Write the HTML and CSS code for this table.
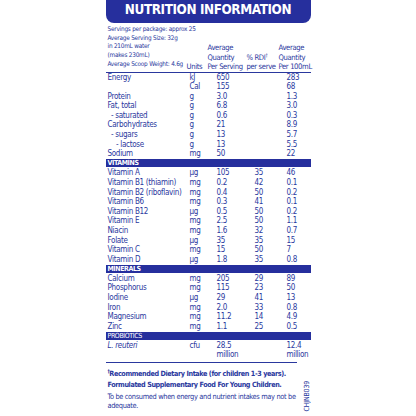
FILE: index.html
```html
<!DOCTYPE html>
<html lang="en">
<head>
  <meta charset="UTF-8">
  <title>Nutrition Information</title>
  <link rel="stylesheet" href="styles.css">
</head>
<body>
  <div class="panel">
    <h1 class="title">NUTRITION INFORMATION</h1>
    <div class="head">
      <div class="serve">
        Servings per package: approx 25<br>
        Average Serving Size: 32g<br>
        in 210mL water<br>
        (makes 230mL)<br>
        Average Scoop Weight: 4.6g
      </div>
      <div class="col">Units</div>
      <div class="col">Average<br>Quantity<br>Per Serving</div>
      <div class="col">% RDI<sup>†</sup><br>per serve</div>
      <div class="col">Average<br>Quantity<br>Per 100mL</div>
    </div>

    <div class="row"><span>Energy</span><span>kJ</span><span>650</span><span></span><span>283</span></div>
    <div class="row"><span></span><span>Cal</span><span>155</span><span></span><span>68</span></div>
    <div class="row"><span>Protein</span><span>g</span><span>3.0</span><span></span><span>1.3</span></div>
    <div class="row"><span>Fat, total</span><span>g</span><span>6.8</span><span></span><span>3.0</span></div>
    <div class="row"><span class="sub">- saturated</span><span>g</span><span>0.6</span><span></span><span>0.3</span></div>
    <div class="row"><span>Carbohydrates</span><span>g</span><span>21</span><span></span><span>8.9</span></div>
    <div class="row"><span class="sub">- sugars</span><span>g</span><span>13</span><span></span><span>5.7</span></div>
    <div class="row"><span class="sub2">- lactose</span><span>g</span><span>13</span><span></span><span>5.5</span></div>
    <div class="row"><span>Sodium</span><span>mg</span><span>50</span><span></span><span>22</span></div>

    <div class="bar bold">VITAMINS</div>
    <div class="row"><span>Vitamin A</span><span>µg</span><span>105</span><span>35</span><span>46</span></div>
    <div class="row"><span>Vitamin B1 (thiamin)</span><span>mg</span><span>0.2</span><span>42</span><span>0.1</span></div>
    <div class="row"><span>Vitamin B2 (riboflavin)</span><span>mg</span><span>0.4</span><span>50</span><span>0.2</span></div>
    <div class="row"><span>Vitamin B6</span><span>mg</span><span>0.3</span><span>41</span><span>0.1</span></div>
    <div class="row"><span>Vitamin B12</span><span>µg</span><span>0.5</span><span>50</span><span>0.2</span></div>
    <div class="row"><span>Vitamin E</span><span>mg</span><span>2.5</span><span>50</span><span>1.1</span></div>
    <div class="row"><span>Niacin</span><span>mg</span><span>1.6</span><span>32</span><span>0.7</span></div>
    <div class="row"><span>Folate</span><span>µg</span><span>35</span><span>35</span><span>15</span></div>
    <div class="row"><span>Vitamin C</span><span>mg</span><span>15</span><span>50</span><span>7</span></div>
    <div class="row"><span>Vitamin D</span><span>µg</span><span>1.8</span><span>35</span><span>0.8</span></div>

    <div class="bar bold">MINERALS</div>
    <div class="row"><span>Calcium</span><span>mg</span><span>205</span><span>29</span><span>89</span></div>
    <div class="row"><span>Phosphorus</span><span>mg</span><span>115</span><span>23</span><span>50</span></div>
    <div class="row"><span>Iodine</span><span>µg</span><span>29</span><span>41</span><span>13</span></div>
    <div class="row"><span>Iron</span><span>mg</span><span>2.0</span><span>33</span><span>0.8</span></div>
    <div class="row"><span>Magnesium</span><span>mg</span><span>11.2</span><span>14</span><span>4.9</span></div>
    <div class="row"><span>Zinc</span><span>mg</span><span>1.1</span><span>25</span><span>0.5</span></div>

    <div class="bar">PROBIOTICS</div>
    <div class="row"><span><i>L. reuteri</i></span><span>cfu</span><span>28.5<br>million</span><span></span><span>12.4<br>million</span></div>

    <div class="foot">
      <div class="notes">
        <p class="bold"><sup>†</sup>Recommended Dietary Intake (for children 1-3 years).</p>
        <p class="bold">Formulated Supplementary Food For Young Children.</p>
        <p class="plain">To be consumed when energy and nutrient intakes may not be adequate.</p>
      </div>
      <div class="code">CHJNB039</div>
    </div>
  </div>
</body>
</html>
```

FILE: styles.css
```css
*{
  padding: 0;
  margin: 0;
}
body{
  background: #fff;
  font-family: "DejaVu Sans Condensed", "DejaVu Sans", "Liberation Sans", sans-serif;
  color: #2a389e;
}
.panel{
  width: 205px;
  margin: 0 auto;
}
.title{
  background: #262f9d;
  color: #fff;
  height: 23px;
  line-height: 20px;
  border-radius: 0 0 8px 8px;
  text-align: center;
  font-size: 13.4px;
  font-weight: bold;
  letter-spacing: -0.4px;
}
.head,
.row{
  display: grid;
  grid-template-columns: 78px 21px 39px 32px 1fr;
  padding-left: 2px;
}
.head{
  align-items: end;
  padding-top: 2px;
  border-bottom: 1px solid #2a389e;
  font-size: 7.6px;
  line-height: 9.5px;
  letter-spacing: -0.35px;
}
.serve{
  font-size: 6.4px;
  line-height: 8.7px;
  letter-spacing: -0.22px;
  padding-bottom: 3px;
  white-space: nowrap;
}
.col{
  white-space: nowrap;
  padding-left: 1px;
}
.col sup{
  font-size: 5px;
  vertical-align: 3px;
}
.row{
  font-size: 8px;
  line-height: 9.6px;
  letter-spacing: -0.3px;
  white-space: nowrap;
}
.row span:nth-child(2){
  padding-left: 4px;
}
.row span:nth-child(3){
  padding-left: 10px;
}
.row span:nth-child(4),
.row span:nth-child(5){
  padding-left: 9px;
}
.sub{
  padding-left: 3.5px;
}
.sub2{
  padding-left: 8.5px;
}
.bar{
  background: #262f9d;
  color: #fff;
  height: 8px;
  line-height: 8.5px;
  font-size: 7px;
  letter-spacing: -0.4px;
  padding-left: 2px;
  margin: 0.5px 0 1px;
}
.bold{
  font-weight: bold;
}
.foot{
  display: flex;
  margin-top: 2px;
}
.notes{
  width: 191px;
  border-top: 1px solid #2a389e;
  padding: 3px 0 0 2px;
  box-sizing: border-box;
}
.notes p{
  font-size: 7.2px;
  line-height: 10.5px;
  letter-spacing: -0.4px;
  white-space: nowrap;
}
.notes .plain{
  width: 189px;
  margin-top: 2px;
  font-size: 7.4px;
  line-height: 9px;
  letter-spacing: -0.35px;
  white-space: normal;
}
.notes sup{
  font-size: 5px;
  vertical-align: 3px;
}
.code{
  writing-mode: vertical-rl;
  transform: rotate(180deg);
  font-size: 7px;
  line-height: 7px;
  letter-spacing: -0.2px;
  margin: 19px 0 0 7px;
}
```
